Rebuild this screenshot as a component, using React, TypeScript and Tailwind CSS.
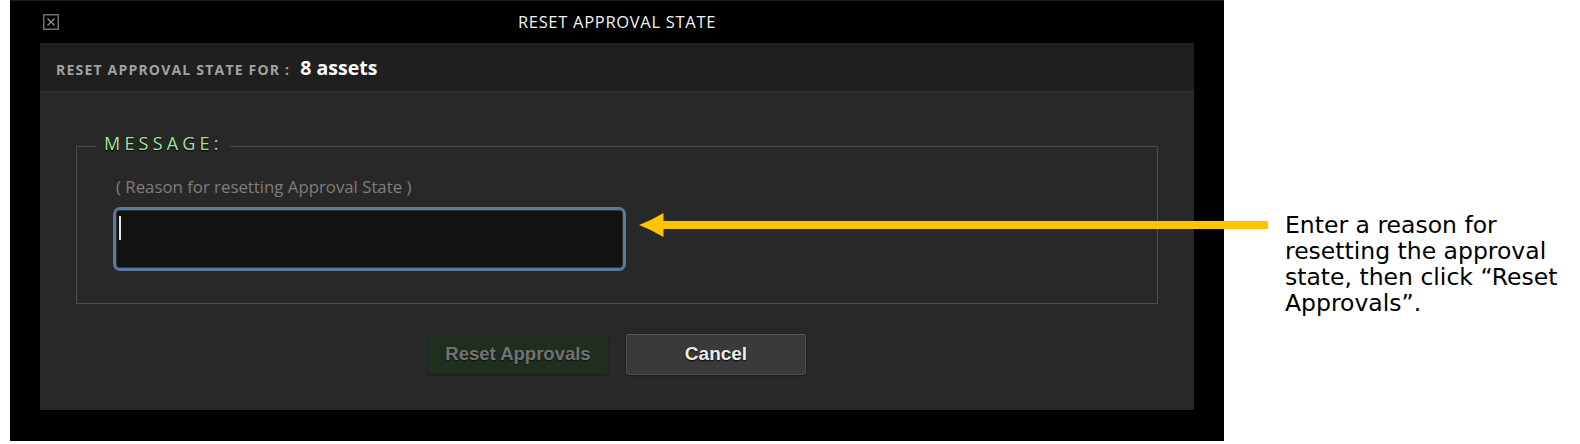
import React from "react";

function CloseIcon() {
  return (
    <svg width="16" height="16" viewBox="0 0 16 16" className="block">
      <rect x="0.75" y="0.75" width="14.5" height="14.5" fill="none" stroke="#6e6e6e" strokeWidth="1.5" />
      <path d="M4.5 4.5 L11.5 11.5 M11.5 4.5 L4.5 11.5" stroke="#8c8c8c" strokeWidth="1.4" />
    </svg>
  );
}

function Arrow() {
  return (
    <svg
      className="absolute left-[639px] top-[212px]"
      width="630"
      height="26"
      viewBox="0 0 630 26"
    >
      <path d="M0 13 Q12 8.5 24.5 1 L24.5 25 Q12 17.5 0 13 Z" fill="#FFC300" />
      <rect x="23" y="9" width="606" height="8" fill="#FFC300" />
    </svg>
  );
}

export default function App() {
  return (
    <div className="relative w-[1580px] h-[444px] bg-white flex pl-[10px] overflow-hidden">
      {/* Dialog */}
      <div className="w-[1214px] h-[441px] bg-black flex flex-col font-['Open_Sans',sans-serif]">
        {/* Title bar */}
        <div className="h-[43px] border-t border-[#1c1c1c] flex">
          <div className="w-[48px] pl-[33px] pt-[13px]">
            <CloseIcon />
          </div>
          <div className="flex-1 text-center pt-[11px] text-[16.5px] leading-[20px] font-medium tracking-[0.7px] text-[#f2f2f2]">
            RESET APPROVAL STATE
          </div>
          <div className="w-[48px]" />
        </div>

        {/* Panel */}
        <div className="mx-[30px] flex flex-col">
          {/* Header band */}
          <div className="h-[50px] bg-[#1f1f1f] border-b-2 border-[#2f2f2f] flex items-baseline pl-[16px] pt-[11px]">
            <span className="text-[14px] leading-[28px] font-bold tracking-[1.2px] text-[#a2a2a2]">
              RESET APPROVAL STATE FOR :
            </span>
            <span className="ml-[10px] text-[19.5px] leading-[28px] font-bold text-white">
              8 assets
            </span>
          </div>

          {/* Body */}
          <div className="h-[317px] bg-[#282828] px-[36px] pt-[53px] flex flex-col">
            <div className="relative h-[158px] border border-[#4d4d4d] pl-[36px] pt-[29px]">
              <span className="absolute left-[20px] top-[-16px] px-[7px] bg-[#282828] text-[18px] leading-[24px] font-medium tracking-[4.2px] text-[#a6e1a0] [text-shadow:0_1px_1px_#000]">
                MESSAGE:
              </span>
              <div className="ml-[3px] text-[16.8px] leading-[22px] text-[#7e7e7e]">
                ( Reason for resetting Approval State )
              </div>
              <div className="mt-[9px] w-[513px] h-[64px] rounded-[7px] border-[3px] border-[#5a7a9c] bg-[#121212] shadow-[inset_0_0_0_1px_#333] pl-[3px] pt-[6px]">
                <div className="w-[2px] h-[24px] bg-[#e6e6e6]" />
              </div>
            </div>

            <div className="mt-[30px] flex justify-center gap-[18px] font-['Liberation_Sans',Arial,sans-serif]">
              <div className="w-[180px] h-[40px] rounded-[3px] bg-[#1f2e1f] flex items-center justify-center text-[18.5px] font-bold text-[#727272] [text-shadow:0_1px_1px_#111] shadow-[0_1px_2px_#1a1a1a]">
                Reset Approvals
              </div>
              <div className="w-[180px] h-[41px] rounded-[3px] bg-[#3a3a3a] border border-[#4c4c4c] border-t-[#5a5a5a] flex items-center justify-center text-[19px] font-bold text-[#ececec] [text-shadow:0_1px_2px_#000] shadow-[0_1px_2px_#1a1a1a]">
                Cancel
              </div>
            </div>
          </div>
        </div>
      </div>

      {/* Annotation */}
      <div className="pl-[61px] pt-[212px] font-['DejaVu_Sans',Verdana,sans-serif] text-[23.5px] leading-[26px] text-black whitespace-nowrap">
        Enter a reason for
        <br />
        resetting the approval
        <br />
        state, then click “Reset
        <br />
        Approvals”.
      </div>

      <Arrow />
    </div>
  );
}
